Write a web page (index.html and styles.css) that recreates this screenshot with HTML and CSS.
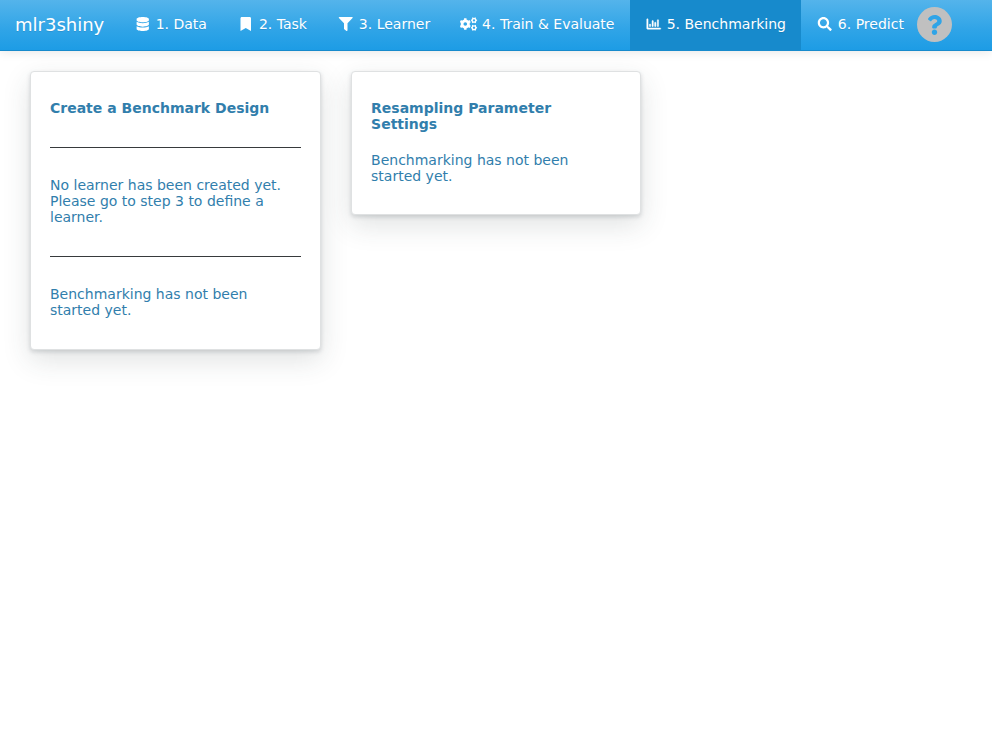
FILE: index.html
```html
<!DOCTYPE html>
<html lang="en">
<head>
<meta charset="utf-8">
<title>mlr3shiny</title>
<link rel="stylesheet" href="styles.css">
</head>
<body>
<nav class="navbar">
  <a class="brand">mlr3shiny</a>
  <a class="tab"><svg class="icon" viewBox="-96 0 640 512"><path d="M448 73.143v45.714C448 159.143 347.667 192 224 192S0 159.143 0 118.857V73.143C0 32.857 100.333 0 224 0s224 32.857 224 73.143zM448 176v102.857C448 319.143 347.667 352 224 352S0 319.143 0 278.857V176c48.125 33.143 136.208 48.572 224 48.572S399.874 209.143 448 176zm0 160v102.857C448 479.143 347.667 512 224 512S0 479.143 0 438.857V336c48.125 33.143 136.208 48.572 224 48.572S399.874 369.143 448 336z"/></svg><span>1. Data</span></a>
  <a class="tab"><svg class="icon bookmark" viewBox="-128 0 640 512"><path d="M0 512V48C0 21.49 21.49 0 48 0h288c26.51 0 48 21.49 48 48v464L192 400 0 512z"/></svg><span>2. Task</span></a>
  <a class="tab"><svg class="icon" viewBox="-64 0 640 512"><path d="M487.976 0H24.028C2.71 0-8.047 25.866 7.058 40.971L192 225.941V432c0 7.831 3.821 15.17 10.237 19.662l80 55.98C298.02 518.69 320 507.493 320 487.98V225.941l184.947-184.97C520.021 25.896 509.338 0 487.976 0z"/></svg><span>3. Learner</span></a>
  <a class="tab"><svg class="icon gears" viewBox="0 0 640 512"><circle cx="193" cy="256" r="117" stroke-width="100"/><path d="M193 48v70M193 394v70M13 152l61 35M312 325l61 35M13 360l61-35M312 187l61-35" stroke-width="90"/><g id="small-gear"><circle cx="512" cy="121" r="68" stroke-width="50"/><path d="M454 21l20 35M550 186l20 35M400 121h30M594 121h30M454 221l20-35M550 56l20-35" stroke-width="48"/></g><use href="#small-gear" y="270"/></svg><span>4. Train &amp; Evaluate</span></a>
  <a class="tab active"><svg class="icon chart" viewBox="-64 0 640 512"><path d="M396.8 352h22.4c6.4 0 12.8-6.4 12.8-12.8V108.8c0-6.4-6.4-12.8-12.8-12.8h-22.4c-6.4 0-12.8 6.4-12.8 12.8v230.4c0 6.4 6.4 12.8 12.8 12.8zm-192 0h22.4c6.4 0 12.8-6.4 12.8-12.8V140.8c0-6.4-6.4-12.8-12.8-12.8h-22.4c-6.4 0-12.8 6.4-12.8 12.8v198.4c0 6.4 6.4 12.8 12.8 12.8zm96 0h22.4c6.4 0 12.8-6.4 12.8-12.8V204.8c0-6.4-6.4-12.8-12.8-12.8h-22.4c-6.4 0-12.8 6.4-12.8 12.8v134.4c0 6.4 6.4 12.8 12.8 12.8zM496 400H48V80c0-8.84-7.16-16-16-16H16C7.16 64 0 71.16 0 80v336c0 17.67 14.33 32 32 32h464c8.84 0 16-7.16 16-16v-16c0-8.84-7.16-16-16-16zm-387.2-48h22.4c6.4 0 12.8-6.4 12.8-12.8v-70.4c0-6.4-6.4-12.8-12.8-12.8h-22.4c-6.4 0-12.8 6.4-12.8 12.8v70.4c0 6.4 6.4 12.8 12.8 12.8z"/></svg><span>5. Benchmarking</span></a>
  <a class="tab"><svg class="icon" viewBox="-64 0 640 512"><path d="M505 442.7L405.3 343c-4.5-4.5-10.6-7-17-7H372c27.6-35.3 44-79.7 44-128C416 93.1 322.9 0 208 0S0 93.1 0 208s93.1 208 208 208c48.3 0 92.7-16.4 128-44v16.3c0 6.4 2.5 12.5 7 17l99.7 99.7c9.4 9.4 24.6 9.4 33.9 0l28.3-28.3c9.4-9.4 9.4-24.6.1-34zM208 336c-70.7 0-128-57.2-128-128 0-70.7 57.2-128 128-128 70.7 0 128 57.2 128 128 0 70.7-57.2 128-128 128z"/></svg><span>6. Predict</span></a>
  <button class="help" aria-label="Help"><svg viewBox="0 0 384 512"><path d="M202.021 0C122.202 0 70.503 32.703 29.914 91.026c-7.363 10.58-5.093 25.086 5.178 32.874l43.138 32.709c10.373 7.865 25.132 6.026 33.253-4.148 25.049-31.381 43.63-49.449 82.757-49.449 30.764 0 68.816 19.799 68.816 49.631 0 22.552-18.617 34.134-48.993 51.164-35.423 19.86-82.299 44.576-82.299 106.405V320c0 13.255 10.745 24 24 24h72.471c13.255 0 24-10.745 24-24v-5.773c0-42.86 125.268-44.645 125.268-160.627C377.504 66.256 286.902 0 202.021 0zM192 373.459c-38.196 0-69.271 31.075-69.271 69.271 0 38.195 31.075 69.27 69.271 69.27s69.271-31.075 69.271-69.271-31.075-69.27-69.271-69.27z"/></svg></button>
</nav>
<main class="content">
  <section class="card">
    <h5>Create a Benchmark Design</h5>
    <hr>
    <p>No learner has been created yet. Please go to step 3 to define a learner.</p>
    <hr>
    <p>Benchmarking has not been started yet.</p>
  </section>
  <section class="card">
    <h5>Resampling Parameter Settings</h5>
    <p>Benchmarking has not been started yet.</p>
  </section>
</main>
</body>
</html>
```
FILE: styles.css
```css
* { box-sizing: border-box; }

body {
  min-height: 100vh;
  margin: 0;
  background: #fff;
  color: #317eac;
  font-family: "DejaVu Sans", sans-serif;
  font-size: 14px;
  line-height: 16.1px;
}

.navbar {
  display: flex;
  height: 51px;
  background-image: linear-gradient(#54b4eb, #2fa4e7 60%, #1d9ce5);
  border-bottom: 1px solid #178acc;
  box-shadow: 0 1px 10px rgba(0, 0, 0, 0.1);
  color: #fff;
  text-shadow: 0 1px 0 rgba(0, 0, 0, 0.1);
  white-space: nowrap;
}

.brand {
  margin-right: -0.5px;
  padding: 15px;
  font-size: 18px;
  line-height: 20px;
}

.tab {
  display: flex;
  gap: 4.45px;
  padding: 14px 15px 16px;
  line-height: 20px;
}

.tab.active {
  margin-left: 0.3px;
  background: #178acc;
}

.icon {
  flex: none;
  width: 17.5px;
  height: 14px;
  margin-top: 3px;
  fill: #fff;
}

.gears {
  fill: none;
  stroke: #fff;
}

.chart {
  stroke: #fff;
  stroke-width: 16px;
}

.help {
  display: flex;
  align-items: center;
  justify-content: center;
  width: 35px;
  height: 35px;
  margin: 7px 0 0 -2px;
  padding: 0;
  border: 0;
  border-radius: 50%;
  background: #c0c0c0;
}

.help svg {
  width: 15px;
  height: 20px;
  fill: #2fa4e7;
}

.content {
  display: grid;
  grid-template-columns: repeat(3, 1fr);
  align-items: start;
  gap: 30px;
  min-height: calc(100vh - 51px);
  padding: 20px 30px;
}

.card {
  padding: 28px 18.6px 30px 19px;
  background: #fff;
  border: 1px solid #dfe1e2;
  border-radius: 4px;
  box-shadow: 0 10px 28px rgba(50, 60, 60, 0.15), 0 2px 4px rgba(50, 60, 70, 0.18);
}

.card + .card { padding-left: 19.4px; }

h5, p {
  margin: 0;
  font-size: 14px;
}

h5 + p { margin-top: 20px; }

hr {
  height: 1px;
  margin: 31px 0 29px;
  border: 0;
  background: #373a3c;
}
```
